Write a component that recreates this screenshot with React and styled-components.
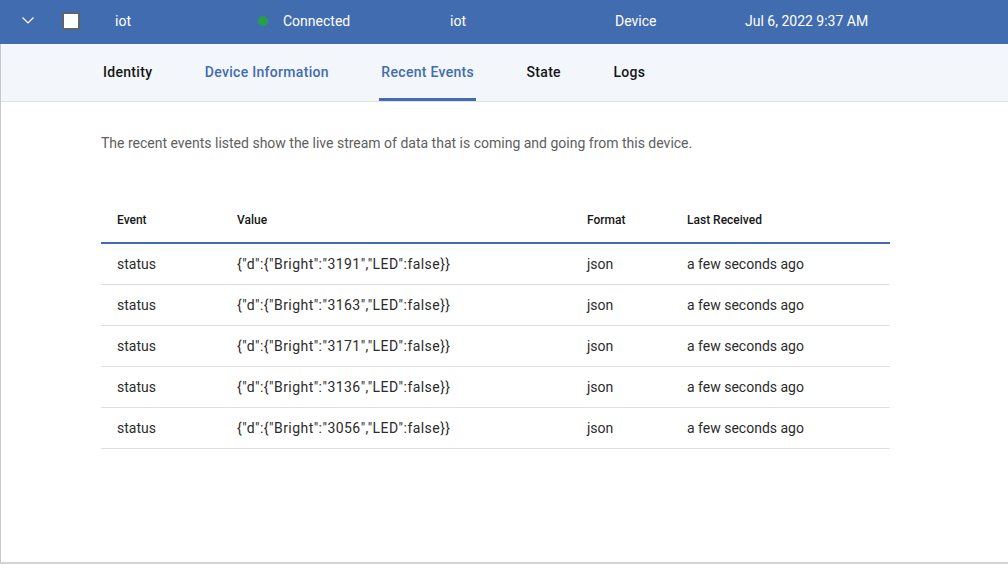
import React from "react";
import styled, { createGlobalStyle } from "styled-components";

const Global = createGlobalStyle`
  html, body { margin: 0; padding: 0; background: #ffffff; }
  body { font-family: Roboto, "Liberation Sans", Arial, sans-serif; }
  * { box-sizing: border-box; }
`;

const Page = styled.div`
  width: 1008px;
  height: 577px;
  background: #ffffff;
`;

const DeviceRow = styled.div`
  display: grid;
  grid-template-columns: 62px 53px 143px 192px 165px 130px 1fr;
  align-items: center;
  height: 44px;
  background: #426cb0;
  color: #ffffff;
  font-size: 14px;
  padding-bottom: 3px;
`;

const Cell = styled.div`
  display: flex;
  align-items: center;
  gap: ${(p) => (p.$gap ? p.$gap : 0)}px;
  padding-left: ${(p) => (p.$pl ? p.$pl : 0)}px;
  white-space: nowrap;
`;

const Checkbox = styled.span`
  display: block;
  width: 18px;
  height: 18px;
  background: #ffffff;
  border: 2px solid #5d6470;
`;

const Dot = styled.span`
  display: block;
  width: 10px;
  height: 10px;
  border-radius: 50%;
  background: #24a148;
`;

const Panel = styled.div`
  height: 520px;
  border-left: 1px solid #c9c9c9;
  border-bottom: 2px solid #d3d3d3;
`;

const TabBar = styled.div`
  display: flex;
  align-items: stretch;
  gap: 48.5px;
  height: 58px;
  padding-left: 100px;
  background: #f3f6fa;
  border-bottom: 1px solid #dfe2e6;
`;

const Tab = styled.div`
  display: flex;
  align-items: center;
  padding: 1px 2px 0;
  font-size: 14px;
  font-weight: 500;
  letter-spacing: 0.3px;
  color: ${(p) => (p.$blue ? "#426cb0" : "#161616")};
  border-bottom: 3px solid ${(p) => (p.$active ? "#426cb0" : "transparent")};
`;

const Content = styled.div`
  padding: 31px 0 0 100px;
`;

const Description = styled.p`
  margin: 0;
  font-size: 14px;
  line-height: 20px;
  color: #5e5e5e;
`;

const Table = styled.div`
  width: 789px;
  margin-top: 44px;
`;

const Row = styled.div`
  display: grid;
  grid-template-columns: 120px 350px 100px 1fr;
  align-items: center;
  padding-left: 16px;
  height: ${(p) => (p.$head ? 47 : 41)}px;
  border-bottom: ${(p) => (p.$head ? "2px solid #426cb0" : "1px solid #e0e0e0")};
  font-size: ${(p) => (p.$head ? 12 : 14)}px;
  font-weight: ${(p) => (p.$head ? 500 : 400)};
  color: ${(p) => (p.$head ? "#161616" : "#2b2b2b")};
  white-space: nowrap;
`;

const Value = styled.span`
  letter-spacing: 0.45px;
`;

const Chevron = () => (
  <svg width="12" height="7" viewBox="0 0 12 7" fill="none">
    <path d="M0.5 0.5 L6 6 L11.5 0.5" stroke="#ffffff" strokeWidth="1.2" />
  </svg>
);

const events = ["3191", "3163", "3171", "3136", "3056"];

export default function App() {
  return (
    <Page>
      <Global />
      <DeviceRow>
        <Cell $pl={22}>
          <Chevron />
        </Cell>
        <Cell>
          <Checkbox />
        </Cell>
        <Cell>iot</Cell>
        <Cell $gap={15}>
          <Dot />
          Connected
        </Cell>
        <Cell>iot</Cell>
        <Cell>Device</Cell>
        <Cell>Jul 6, 2022 9:37 AM</Cell>
      </DeviceRow>
      <Panel>
        <TabBar>
          <Tab>Identity</Tab>
          <Tab $blue>Device Information</Tab>
          <Tab $blue $active>Recent Events</Tab>
          <Tab>State</Tab>
          <Tab>Logs</Tab>
        </TabBar>
        <Content>
          <Description>
            The recent events listed show the live stream of data that is coming and going from this device.
          </Description>
          <Table>
            <Row $head>
              <span>Event</span>
              <span>Value</span>
              <span>Format</span>
              <span>Last Received</span>
            </Row>
            {events.map((v) => (
              <Row key={v}>
                <span>status</span>
                <Value>{`{"d":{"Bright":"${v}","LED":false}}`}</Value>
                <span>json</span>
                <span>a few seconds ago</span>
              </Row>
            ))}
          </Table>
        </Content>
      </Panel>
    </Page>
  );
}
